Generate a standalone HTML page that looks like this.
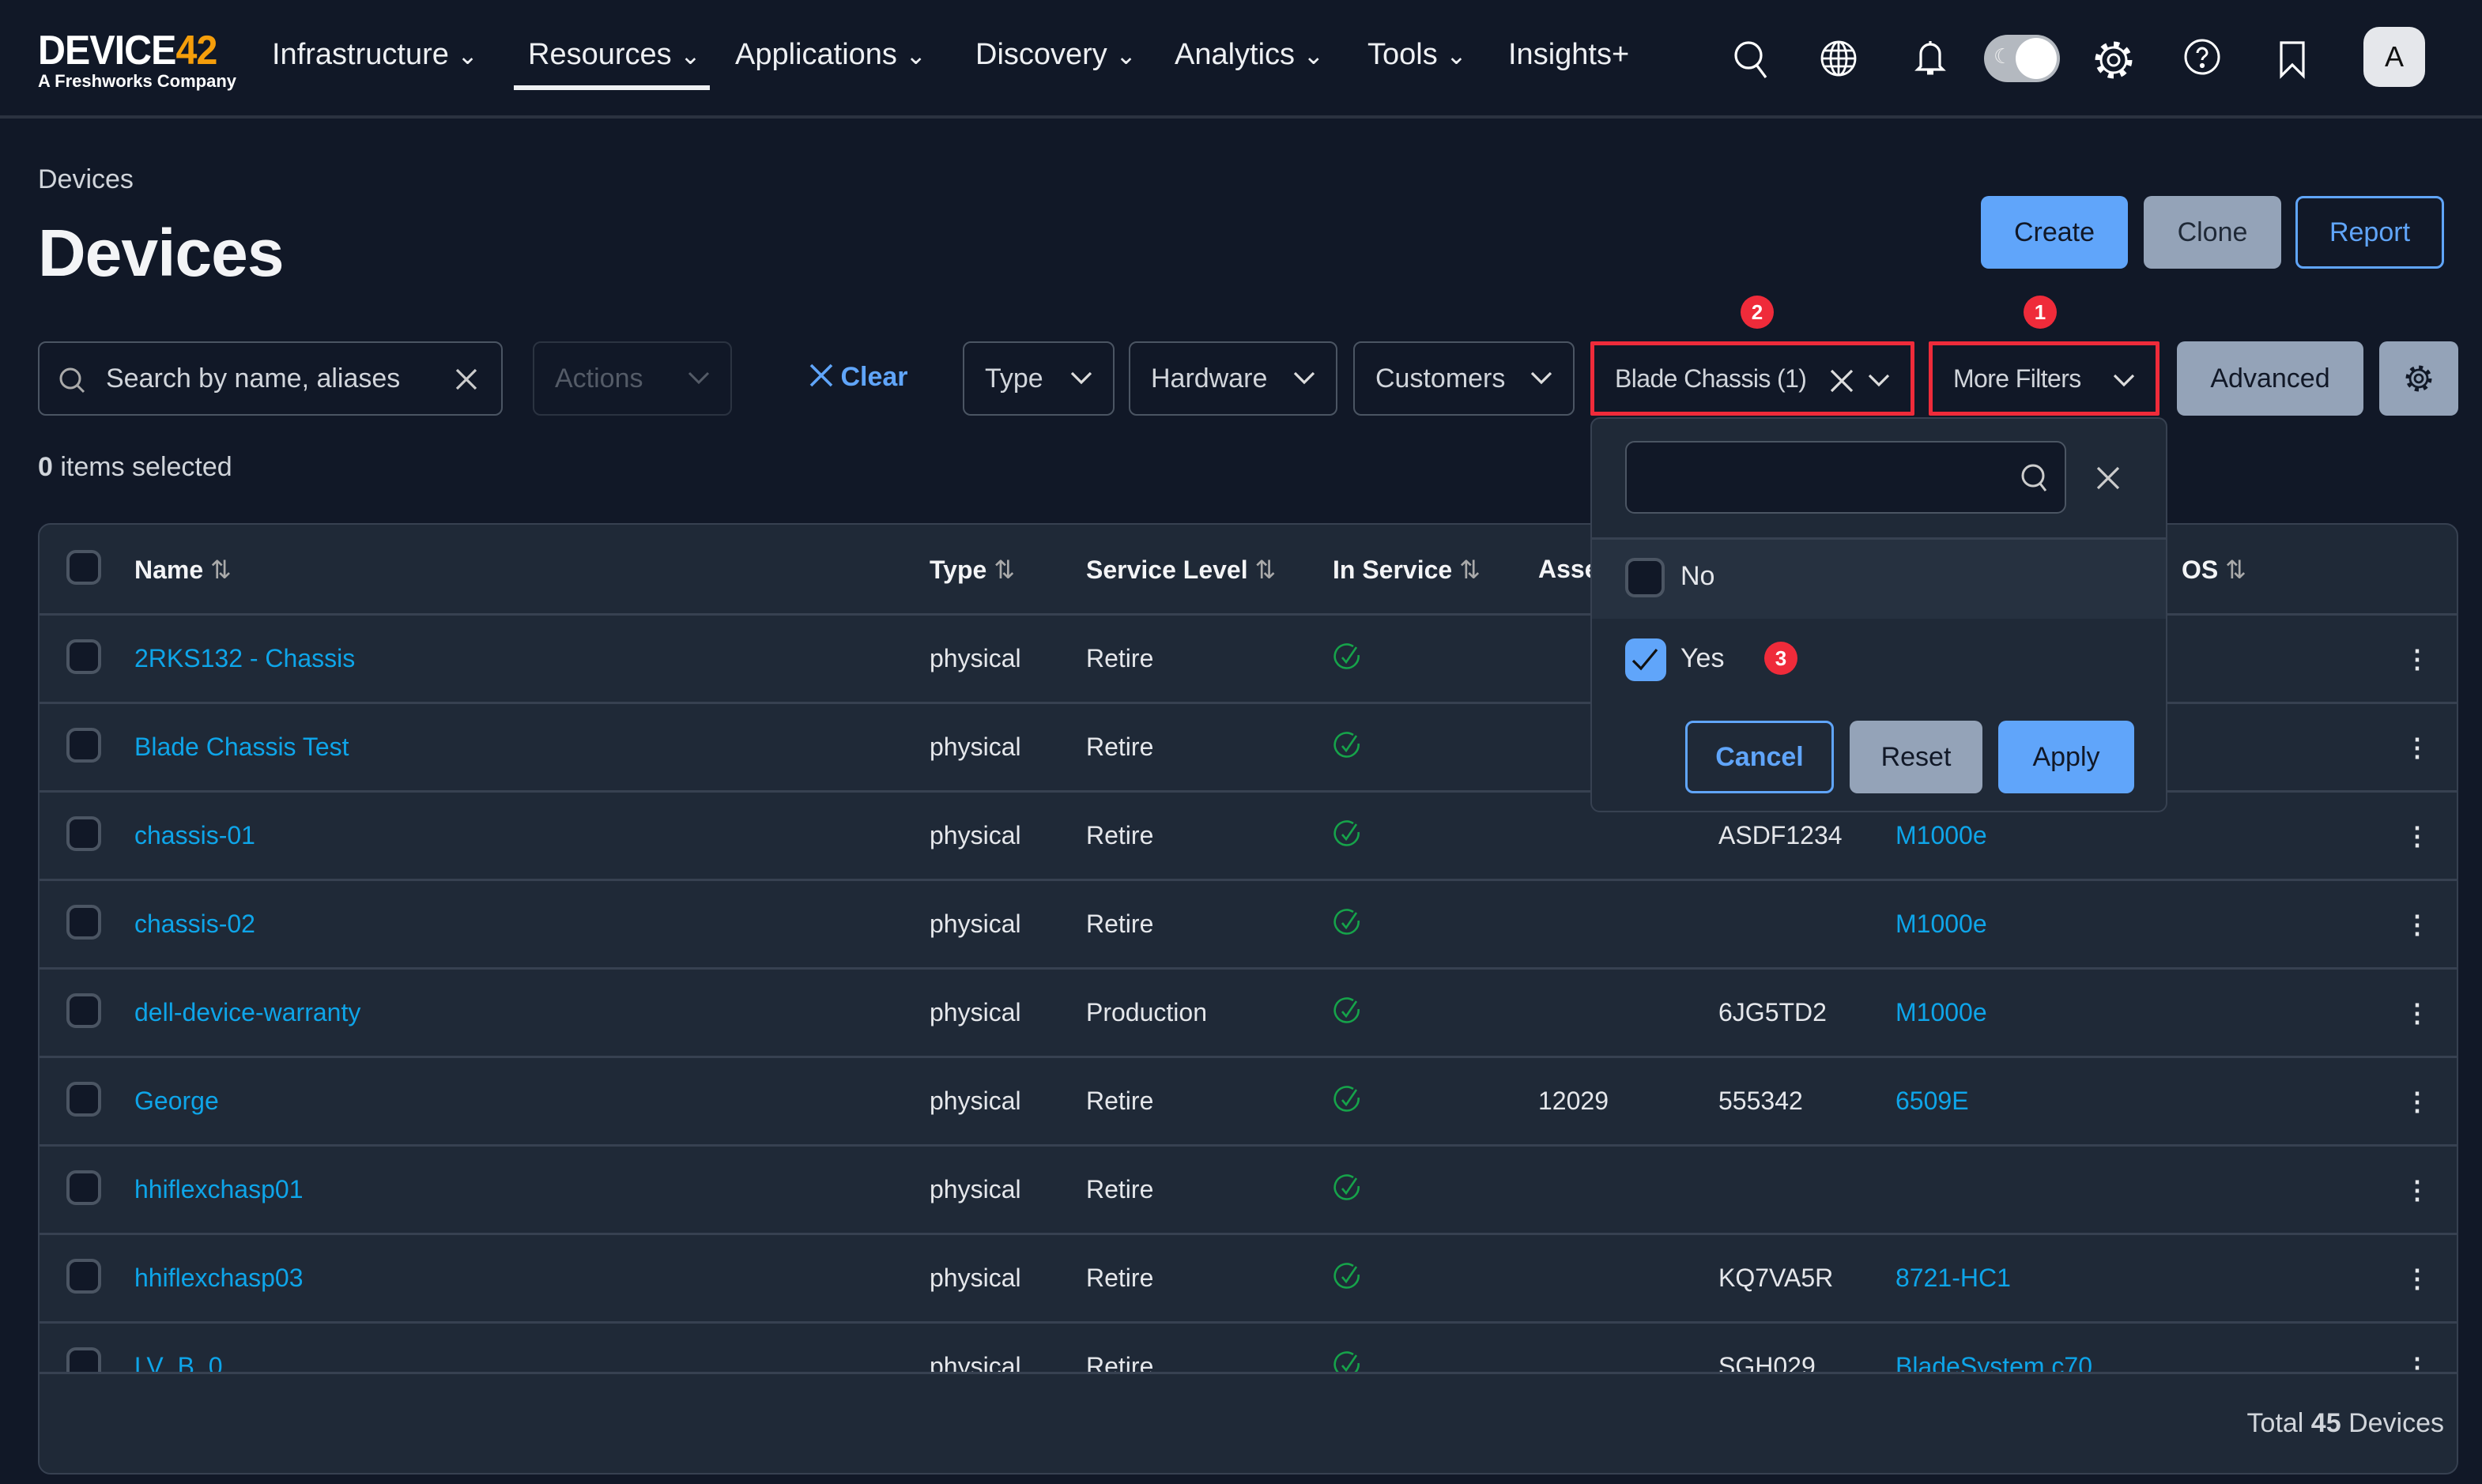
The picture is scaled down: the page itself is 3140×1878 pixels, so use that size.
<!DOCTYPE html>
<html><head><meta charset="utf-8"><style>
html,body{margin:0;padding:0;background:#111827;}
body{width:3140px;height:1878px;overflow:hidden;}
#p{zoom:2;position:relative;width:1570px;height:939px;font-family:"Liberation Sans",sans-serif;color:#e5e7eb;background:#111827;overflow:hidden}
.a{position:absolute;white-space:nowrap}
.nav{font-size:19px;color:#eef0f3;top:24px}
.btn{position:absolute;border-radius:5px;display:flex;align-items:center;justify-content:center;font-size:17px;box-sizing:border-box}
.sel{position:absolute;top:216px;height:47px;border:1px solid #4b5563;border-radius:5px;box-sizing:border-box;font-size:17px;color:#d1d5db;display:flex;align-items:center;padding-left:13px}
.chev{position:absolute;right:12px;top:14px}
.badge{position:absolute;width:21px;height:21px;border-radius:50%;background:#ef2b3a;color:#fff;font-size:13px;font-weight:bold;display:flex;align-items:center;justify-content:center}
.row{position:absolute;left:0;width:1530px;height:56px;border-top:1.5px solid #374151;font-size:16px;color:#e5e7eb}
.row span{position:absolute;top:18px}
.row svg.ck{position:absolute;left:818px;top:17px}
.cb{position:absolute;left:17px;top:15px;width:22px;height:22px;border:2px solid #4b5563;border-radius:6px;background:#111827;box-sizing:border-box}
.lk{color:#0ea5e9}
.th{position:absolute;top:19px;font-weight:bold;font-size:16px;color:#f3f4f6}
</style></head><body><div id="p">
<svg width="0" height="0" style="position:absolute"><defs><symbol id="ck" viewBox="0 0 18 18"><path d="M13 2.5A7.5 7.5 0 1 0 16.3 8" fill="none" stroke="#16a34a" stroke-width="1.3"/><path d="M6 9.5l2.5 3L15 3" fill="none" stroke="#16a34a" stroke-width="1.3"/></symbol></defs></svg>
<!-- nav -->
<div class="a" style="left:24px;top:17px;font-size:26px;font-weight:bold;letter-spacing:-0.5px;color:#fff;transform:scaleX(0.93);transform-origin:left">DEVICE<span style="color:#f59e0b">42</span></div>
<div class="a" style="left:24px;top:45px;font-size:11px;color:#fff;font-weight:bold">A Freshworks Company</div>
<div class="a nav" style="left:172px">Infrastructure <small>&#8964;</small></div>
<div class="a nav" style="left:334px">Resources <small>&#8964;</small></div>
<div class="a" style="left:325px;top:54px;width:124px;height:3px;background:#eef0f3"></div>
<div class="a nav" style="left:465px">Applications <small>&#8964;</small></div>
<div class="a nav" style="left:617px">Discovery <small>&#8964;</small></div>
<div class="a nav" style="left:743px">Analytics <small>&#8964;</small></div>
<div class="a nav" style="left:865px">Tools <small>&#8964;</small></div>
<div class="a nav" style="left:954px">Insights+</div>
<svg class="a" style="left:1096px;top:25px" width="24" height="26" fill="none" stroke="#fff" stroke-width="1.6"><circle cx="10" cy="10" r="8"/><path d="M15 16l6 8"/></svg>
<svg class="a" style="left:1151px;top:25px" width="24" height="24" fill="none" stroke="#fff" stroke-width="1.4"><ellipse cx="12" cy="12" rx="10.5" ry="10.5"/><ellipse cx="12" cy="12" rx="5" ry="10.5"/><path d="M1.5 12h21M3 7h18M3 17h18M12 1.5v21"/></svg>
<svg class="a" style="left:1209px;top:24px" width="24" height="28" fill="none" stroke="#fff" stroke-width="1.6"><path d="M12 2v2M6 18V10a6 6 0 0112 0v8l2 2H4z"/><path d="M10 22h4" stroke-width="2.5"/></svg>
<div class="a" style="left:1255px;top:22px;width:48px;height:30px;border-radius:15px;background:#b4b9c0"></div>
<div class="a" style="left:1275px;top:24px;width:26px;height:26px;border-radius:50%;background:#fff"></div>
<div class="a" style="left:1261px;top:28px;font-size:13px;color:#eee">&#9790;</div>
<svg class="a" style="left:1324px;top:24px" width="26" height="28" viewBox="0 0 26 28" fill="none" stroke="#fff" stroke-width="1.5"><circle cx="13" cy="14" r="3.5"/><circle cx="13" cy="14" r="8"/><circle cx="13" cy="14" r="10" stroke-width="3.5" stroke-dasharray="3.5 4.35"/></svg>
<svg class="a" style="left:1381px;top:24px" width="26" height="26" fill="none" stroke="#fff" stroke-width="1.5"><circle cx="12" cy="12" r="10.5"/><path d="M9 9.5a3 3 0 116 0c0 2-3 2.3-3 4.5"/><circle cx="12" cy="17.5" r="0.8" fill="#fff"/></svg>
<svg class="a" style="left:1440px;top:25px" width="22" height="26" fill="none" stroke="#fff" stroke-width="1.6"><path d="M3 2h14v21l-7-7-7 7z"/></svg>
<div class="a" style="left:1495px;top:17px;width:39px;height:38px;border-radius:10px;background:#e5e7eb;color:#111;font-size:18px;display:flex;align-items:center;justify-content:center">A</div>
<div class="a" style="left:0;top:73px;width:1570px;height:2px;background:#2b3240"></div>
<!-- header -->
<div class="a" style="left:24px;top:104px;font-size:17px;color:#d1d5db">Devices</div>
<div class="a" style="left:24px;top:136px;font-size:42px;font-weight:bold;color:#f3f4f6;letter-spacing:-0.5px">Devices</div>
<div class="btn" style="left:1253px;top:124px;width:93px;height:46px;background:#60a5fa;color:#111827">Create</div>
<div class="btn" style="left:1356px;top:124px;width:87px;height:46px;background:#94a3b8;color:#1f2937">Clone</div>
<div class="btn" style="left:1452px;top:124px;width:94px;height:46px;border:1.5px solid #60a5fa;color:#60a5fa">Report</div>
<!-- filters -->
<div class="sel" style="left:24px;width:294px;padding-left:42px;color:#d1d5db">Search by name, aliases
<svg style="position:absolute;left:12px;top:15px" width="18" height="18" fill="none" stroke="#aaa" stroke-width="1.5"><circle cx="7.5" cy="7.5" r="6"/><path d="M12 12l4 4"/></svg>
<svg style="position:absolute;right:14px;top:15px" width="16" height="16" stroke="#ccc" stroke-width="1.6"><path d="M2 2l12 12M14 2L2 14"/></svg></div>
<div class="sel" style="left:337px;width:126px;color:#545b67;border-color:#2b3341">Actions<svg class="chev" width="16" height="16" fill="none" stroke="#545b67" stroke-width="1.5"><path d="M2 5l6 6 6-6"/></svg></div>
<div class="a" style="left:512px;top:229px;font-size:17px;color:#60a5fa;font-weight:bold"><svg width="15" height="15" stroke="#60a5fa" stroke-width="1.8" style="vertical-align:-1px"><path d="M1 1l13 13M14 1L1 14"/></svg> Clear</div>
<div class="sel" style="left:609px;width:96px">Type<svg class="chev" width="16" height="16" fill="none" stroke="#ddd" stroke-width="1.6"><path d="M2 5l6 6 6-6"/></svg></div>
<div class="sel" style="left:714px;width:132px">Hardware<svg class="chev" width="16" height="16" fill="none" stroke="#ddd" stroke-width="1.6"><path d="M2 5l6 6 6-6"/></svg></div>
<div class="sel" style="left:856px;width:140px">Customers<svg class="chev" width="16" height="16" fill="none" stroke="#ddd" stroke-width="1.6"><path d="M2 5l6 6 6-6"/></svg></div>
<div class="sel" style="left:1006px;width:205px;border:2.5px solid #ef2b3a;border-radius:1px;font-size:16px;letter-spacing:-0.3px">Blade Chassis (1)
<svg style="position:absolute;right:36px;top:15px" width="15" height="15" stroke="#ddd" stroke-width="1.6"><path d="M1 1l13 13M14 1L1 14"/></svg>
<svg class="chev" width="16" height="16" fill="none" stroke="#ddd" stroke-width="1.6"><path d="M2 5l6 6 6-6"/></svg></div>
<div class="sel" style="left:1220px;width:146px;border:2.5px solid #ef2b3a;border-radius:1px;font-size:16px;letter-spacing:-0.3px">More Filters<svg class="chev" width="16" height="16" fill="none" stroke="#ddd" stroke-width="1.6"><path d="M2 5l6 6 6-6"/></svg></div>
<div class="btn" style="left:1377px;top:216px;width:118px;height:47px;background:#94a3b8;color:#111827">Advanced</div>
<div class="btn" style="left:1505px;top:216px;width:50px;height:47px;background:#94a3b8"><svg width="18" height="18" fill="none" stroke="#111827" stroke-width="1.4"><circle cx="9" cy="9" r="2.5"/><circle cx="9" cy="9" r="5.5"/><circle cx="9" cy="9" r="7" stroke-width="2.5" stroke-dasharray="2.5 3"/></svg></div>
<div class="badge" style="left:1101px;top:187px">2</div>
<div class="badge" style="left:1280px;top:187px">1</div>
<div class="a" style="left:24px;top:286px;font-size:17px;color:#d1d5db"><b>0</b> items selected</div>
<!-- table -->
<div class="a" style="left:24px;top:331px;width:1531px;height:602px;background:#1f2937;border:1px solid #374151;border-radius:8px;box-sizing:border-box;overflow:hidden">
 <div class="cb" style="top:16px"></div>
 <div class="th" style="left:60px">Name <span style="font-weight:normal;color:#aaa">&#8645;</span></div>
 <div class="th" style="left:563px">Type <span style="font-weight:normal;color:#aaa">&#8645;</span></div>
 <div class="th" style="left:662px">Service Level <span style="font-weight:normal;color:#aaa">&#8645;</span></div>
 <div class="th" style="left:818px">In Service <span style="font-weight:normal;color:#aaa">&#8645;</span></div>
 <div class="th" style="left:948px">Asset</div>
 <div class="th" style="left:1355px">OS <span style="font-weight:normal;color:#aaa">&#8645;</span></div>
 <div style="position:absolute;left:0;top:56px;width:1531px;height:480px;overflow:hidden">
 <div class="row" style="top:0"><div class="cb"></div><span class="lk" style="left:60px">2RKS132 - Chassis</span><span style="left:563px">physical</span><span style="left:662px">Retire</span><svg class="ck" width="18" height="18"><use href="#ck"/></svg><span style="left:1496px;font-weight:bold">&#8942;</span></div>
 <div class="row" style="top:56px"><div class="cb"></div><span class="lk" style="left:60px">Blade Chassis Test</span><span style="left:563px">physical</span><span style="left:662px">Retire</span><svg class="ck" width="18" height="18"><use href="#ck"/></svg><span style="left:1496px;font-weight:bold">&#8942;</span></div>
 <div class="row" style="top:112px"><div class="cb"></div><span class="lk" style="left:60px">chassis-01</span><span style="left:563px">physical</span><span style="left:662px">Retire</span><svg class="ck" width="18" height="18"><use href="#ck"/></svg><span style="left:1062px">ASDF1234</span><span class="lk" style="left:1174px">M1000e</span><span style="left:1496px;font-weight:bold">&#8942;</span></div>
 <div class="row" style="top:168px"><div class="cb"></div><span class="lk" style="left:60px">chassis-02</span><span style="left:563px">physical</span><span style="left:662px">Retire</span><svg class="ck" width="18" height="18"><use href="#ck"/></svg><span class="lk" style="left:1174px">M1000e</span><span style="left:1496px;font-weight:bold">&#8942;</span></div>
 <div class="row" style="top:224px"><div class="cb"></div><span class="lk" style="left:60px">dell-device-warranty</span><span style="left:563px">physical</span><span style="left:662px">Production</span><svg class="ck" width="18" height="18"><use href="#ck"/></svg><span style="left:1062px">6JG5TD2</span><span class="lk" style="left:1174px">M1000e</span><span style="left:1496px;font-weight:bold">&#8942;</span></div>
 <div class="row" style="top:280px"><div class="cb"></div><span class="lk" style="left:60px">George</span><span style="left:563px">physical</span><span style="left:662px">Retire</span><svg class="ck" width="18" height="18"><use href="#ck"/></svg><span style="left:948px">12029</span><span style="left:1062px">555342</span><span class="lk" style="left:1174px">6509E</span><span style="left:1496px;font-weight:bold">&#8942;</span></div>
 <div class="row" style="top:336px"><div class="cb"></div><span class="lk" style="left:60px">hhiflexchasp01</span><span style="left:563px">physical</span><span style="left:662px">Retire</span><svg class="ck" width="18" height="18"><use href="#ck"/></svg><span style="left:1496px;font-weight:bold">&#8942;</span></div>
 <div class="row" style="top:392px"><div class="cb"></div><span class="lk" style="left:60px">hhiflexchasp03</span><span style="left:563px">physical</span><span style="left:662px">Retire</span><svg class="ck" width="18" height="18"><use href="#ck"/></svg><span style="left:1062px">KQ7VA5R</span><span class="lk" style="left:1174px">8721-HC1</span><span style="left:1496px;font-weight:bold">&#8942;</span></div>
 <div class="row" style="top:448px"><div class="cb"></div><span class="lk" style="left:60px">LV_B_0</span><span style="left:563px">physical</span><span style="left:662px">Retire</span><svg class="ck" width="18" height="18"><use href="#ck"/></svg><span style="left:1062px">SGH029</span><span class="lk" style="left:1174px">BladeSystem c70</span><span style="left:1496px;font-weight:bold">&#8942;</span></div>
 </div>
 <div style="position:absolute;left:0;top:536px;width:1531px;height:70px;background:#1f2937;border-top:1.5px solid #374151"></div>
 <div class="a" style="right:8px;top:559px;font-size:17px;color:#d1d5db">Total <b>45</b> Devices</div>
</div>
<!-- dropdown -->
<div class="a" style="left:1006px;top:264px;width:365px;height:250px;background:#1f2937;border:1px solid #374151;border-radius:6px;box-sizing:border-box;overflow:hidden">
 <div class="a" style="left:21px;top:14px;width:279px;height:46px;background:#111827;border:1px solid #4b5563;border-radius:6px;box-sizing:border-box"></div>
 <svg class="a" style="left:271px;top:28px" width="18" height="20" fill="none" stroke="#ccc" stroke-width="1.5"><circle cx="8" cy="8" r="6.5"/><path d="M12.5 13l3.5 4.5"/></svg>
 <svg class="a" style="left:319px;top:30px" width="15" height="15" stroke="#ccc" stroke-width="1.6"><path d="M1 1l13 13M14 1L1 14"/></svg>
 <div class="a" style="left:0;top:75px;width:365px;height:50px;background:#263140;border-top:1.5px solid #374151"></div>
 <div class="a" style="left:21px;top:88px;width:25px;height:25px;border:2px solid #4b5563;border-radius:6px;background:#111827;box-sizing:border-box"></div>
 <div class="a" style="left:56px;top:90px;font-size:17px">No</div>
 <div class="a" style="left:21px;top:139px;width:26px;height:27px;border-radius:6px;background:#60a5fa"><svg width="26" height="27" fill="none" stroke="#111" stroke-width="1.6"><path d="M5 14l5 5 10-12"/></svg></div>
 <div class="a" style="left:56px;top:142px;font-size:17px">Yes</div>
 <div class="badge" style="left:109px;top:141px">3</div>
 <div class="btn" style="left:59px;top:191px;width:94px;height:46px;border:1.5px solid #60a5fa;color:#60a5fa;font-weight:bold">Cancel</div>
 <div class="btn" style="left:163px;top:191px;width:84px;height:46px;background:#94a3b8;color:#111827">Reset</div>
 <div class="btn" style="left:257px;top:191px;width:86px;height:46px;background:#60a5fa;color:#111827">Apply</div>
</div>
</div></body></html>
